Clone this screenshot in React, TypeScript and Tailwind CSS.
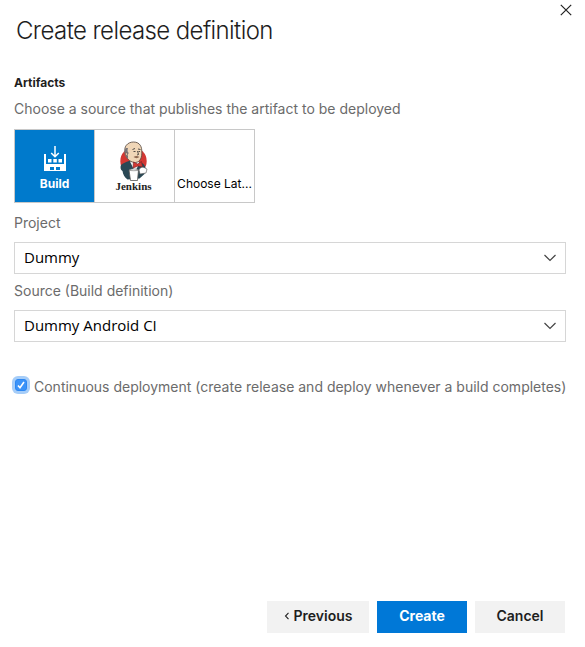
import React, { useState } from "react";

function BuildIcon() {
  return (
    <svg width="22" height="26" viewBox="0 0 22 26" aria-hidden="true">
      <path d="M11 0v10.500M7.200 7L11 10.800 14.800 7" fill="none" stroke="#fff" strokeWidth="1.500" />
      <path
        fill="#fff"
        fillRule="evenodd"
        d="M0 8h2v10h18V8h2v17H0zM6 21v3h4v-3zm6 0v3h4v-3z"
      />
      <path fill="#fff" d="M4 13h3.500v3.500H4zM9.300 13h3.500v3.500H9.300zM14.500 13H18v3.500h-3.500z" />
    </svg>
  );
}

function JenkinsIcon() {
  return (
    <svg width="36" height="40" viewBox="0 0 36 40" aria-hidden="true">
      <ellipse cx="17.500" cy="20" rx="13.200" ry="13.500" fill="#d33833" />
      <path d="M6.500 30c-2-1-2.500-4-1.500-6 2-2 5-3 8-4l11 1c3 1 5 3 5.500 6l-1 6-5 4.500-12 1c-3-2-4.500-5-5-8.500z" fill="#2a4855" />
      <path d="M14 20.500L19 31l4.500-9-2-3z" fill="#f4f4f4" />
      <path d="M9.500 12C7 6 11.500 1 17.500 1 24 1 26 6 25.800 11c.2 5-1.300 10-6.300 10.500-4.500 0-8-3-9-6z" fill="#f0d6b7" stroke="#51423a" strokeWidth=".8" />
      <path d="M9.700 7c-2 3-1.500 6 .3 9l2 2c.5-3-1-4 .8-6-1.500-1-1.500-3-.8-5z" fill="#77757a" />
      <path d="M10.500 11.500c-2 0-1.500 3.500 1 3.500" fill="#e9bd9b" stroke="#51423a" strokeWidth=".6" />
      <path d="M16.500 8.500l2.500-1M22 8l2.500.5M17.500 10.500h2M22.500 10.500H24M21.500 10l1 3.500-1.500.5" fill="none" stroke="#403b38" strokeWidth=".9" />
      <path d="M17.500 16c2-1.500 4-1.500 6 0-2 1.500-4 1.500-6 0z" fill="#8e6850" />
      <path d="M17.500 21l4 2 4-2.500 1 5.500-4.500-1-5 2z" fill="#d33833" stroke="#771e24" strokeWidth=".6" />
      <path d="M23 29c1-3 4-3.500 6-2l2 1-1 4-6 1z" fill="#fff" stroke="#555" strokeWidth=".6" />
      <path d="M13 29h9.500l-1 10.500h-7z" fill="#fff" stroke="#555" strokeWidth=".8" />
      <path d="M13 29c2-1.500 7.500-1.500 9.500 0-2 1-7.500 1-9.500 0z" fill="#eee" stroke="#777" strokeWidth=".5" />
    </svg>
  );
}

function SelectField({ id, label, value }: { id: string; label: string; value: string }) {
  return (
    <div>
      <label htmlFor={id} className="block text-sm leading-5 text-[#6b6b6b]">
        {label}
      </label>
      <div className="relative mt-[9px]">
        <select
          id={id}
          defaultValue={value}
          className="block h-8 w-full appearance-none border border-[#d6d6d6] bg-white pr-8 pb-0.5 pl-[9px] font-['Open_Sans','Noto_Sans',sans-serif] text-[15px] text-black"
        >
          <option>{value}</option>
        </select>
        <svg className="pointer-events-none absolute top-3 right-2.5" width="12" height="8" viewBox="0 0 12 8" aria-hidden="true">
          <path d="M.5 1L6 6.500 11.500 1" fill="none" stroke="#444" strokeWidth="1.200" />
        </svg>
      </div>
    </div>
  );
}

const tile = "flex h-[74px] flex-col items-center";

export default function App() {
  const [source, setSource] = useState("build");
  return (
    <main className="flex min-h-screen flex-col bg-white pr-[19px] pb-3.5 pl-3.5 font-['Inter',sans-serif] text-[#1e1e1e]">
      <header className="-mr-2 flex items-start justify-between">
        <h1 className="mt-3.5 ml-0.5 text-2xl leading-[34px] font-light tracking-tight">Create release definition</h1>
        <button type="button" aria-label="Close" className="mt-1 mr-0.5">
          <svg width="12" height="12" viewBox="0 0 12 12" aria-hidden="true">
            <path d="M.8.8l10.400 10.400M11.200.8L.8 11.200" stroke="#222" strokeWidth="1.200" />
          </svg>
        </button>
      </header>

      <section className="mt-[25px]">
        <h2 className="text-xs leading-5 font-bold">Artifacts</h2>
        <p className="mt-1.5 text-sm leading-5 text-[#6b6b6b]">Choose a source that publishes the artifact to be deployed</p>
        <div className="mt-2.5 grid w-fit grid-cols-[81px_80px_80px]">
          <button
            type="button"
            aria-pressed={source === "build"}
            onClick={() => setSource("build")}
            className={`${tile} border border-[#c8c8c8] bg-[#007acc] pt-4 text-white`}
          >
            <BuildIcon />
            <span className="mt-1 text-xs leading-4 font-bold">Build</span>
          </button>
          <button
            type="button"
            aria-pressed={source === "jenkins"}
            onClick={() => setSource("jenkins")}
            className={`${tile} border-y border-r border-[#c8c8c8] pt-[11px] pr-0.5`}
          >
            <JenkinsIcon />
            <span className="font-['Liberation_Serif',serif] text-[11px] leading-[10px] font-bold">Jenkins</span>
          </button>
          <button
            type="button"
            aria-pressed={source === "latest"}
            onClick={() => setSource("latest")}
            className={`${tile} justify-end border-y border-r border-[#c8c8c8] pb-2.5 text-xs leading-4 text-black`}
          >
            Choose Lat...
          </button>
        </div>
      </section>

      <form className="mt-2.5 flex flex-1 flex-col" onSubmit={(e) => e.preventDefault()}>
        <div className="flex flex-col gap-[7px]">
          <SelectField id="project" label="Project" value="Dummy" />
          <SelectField id="source" label="Source (Build definition)" value="Dummy Android CI" />
        </div>
        <div className="mt-[35px] -mr-4 flex items-start gap-[7px]">
          <span className="relative flex">
            <input
              id="continuous"
              type="checkbox"
              defaultChecked
              className="peer ml-px mt-0.5 size-3 appearance-none rounded-[3px] border border-[#8e8e8e] ring-[3px] ring-[#a6cdf8] checked:border-[#2b87f3] checked:bg-[#3b93f8]"
            />
            <svg className="pointer-events-none absolute top-0.5 left-px hidden peer-checked:block" width="12" height="12" viewBox="0 0 12 12" aria-hidden="true">
              <path d="M3 6.400l2 2.300L9 3" fill="none" stroke="#fff" strokeWidth="1.600" />
            </svg>
          </span>
          <label htmlFor="continuous" className="text-sm leading-5 text-[#6b6b6b]">
            Continuous deployment (create release and deploy whenever a build completes)
          </label>
        </div>
        <footer className="mt-auto mr-px flex justify-end gap-2 text-sm font-semibold">
          <button type="button" className="flex h-8 w-[102px] items-center justify-center gap-1 bg-[#f2f2f2] pb-0.5">
            <svg width="6" height="8" viewBox="0 0 6 8" aria-hidden="true">
              <path d="M4.500.8L1.500 4l3 3.200" fill="none" stroke="#222" strokeWidth="1.100" />
            </svg>
            Previous
          </button>
          <button type="submit" className="h-8 w-[90px] bg-[#0078d7] pb-0.5 font-bold text-white">Create</button>
          <button type="button" className="h-8 w-[90px] bg-[#f2f2f2] pb-0.5">Cancel</button>
        </footer>
      </form>
    </main>
  );
}
